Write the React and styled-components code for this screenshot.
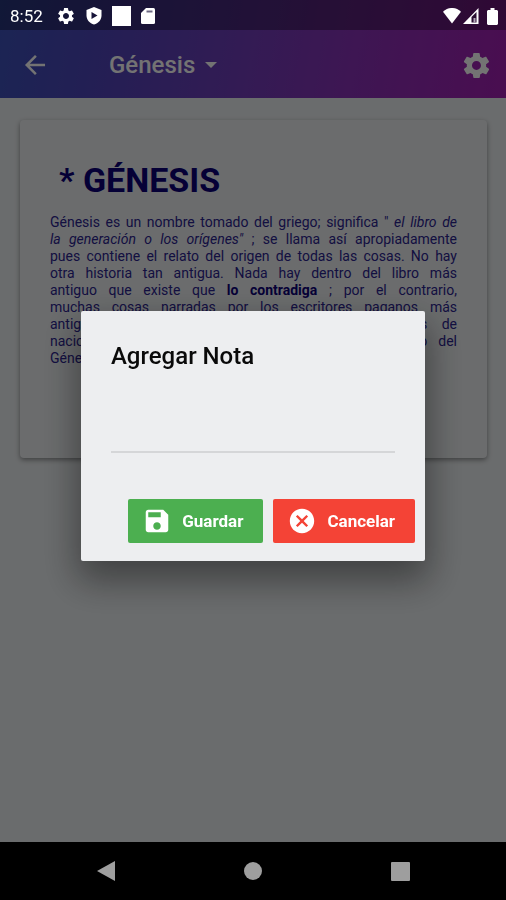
import styled, { createGlobalStyle } from "styled-components";
import { IoMdArrowBack, IoMdSettings, IoMdSave, IoMdCloseCircle } from "react-icons/io";
import { MdSettings } from "react-icons/md";

const GlobalStyle = createGlobalStyle`
  * {
    box-sizing: border-box;
  }
  body {
    margin: 0;
    background: #ebeff1;
    font-family: Roboto, "Liberation Sans", sans-serif;
  }
  svg {
    display: block;
    flex: none;
  }
`;

const Screen = styled.div`
  display: flex;
  flex-direction: column;
  min-height: 100vh;
`;

const TopArea = styled.div`
  background: linear-gradient(100deg, #3c52ba 0%, #4e45ba 20%, #733cba 50%, #8a31b8 70%, #a41fb2 100%);
`;

const StatusBar = styled.div`
  position: relative;
  z-index: 2;
  display: flex;
  justify-content: space-between;
  align-items: center;
  height: 30px;
  padding: 2px 8px 0 10px;
  background: rgba(0, 0, 0, 0.34);
  color: #fff;
`;

const StatusGroup = styled.div`
  display: flex;
  align-items: center;
  gap: ${({ $gap }) => $gap}px;
`;

const Clock = styled.time`
  min-width: 36px;
  font-size: 17px;
  line-height: 20px;
`;

const Toolbar = styled.header`
  display: flex;
  align-items: center;
  height: 68px;
  padding: 2px 14px 0 20px;
  color: #fff;
`;

const IconButton = styled.button`
  padding: 0;
  border: 0;
  background: none;
  color: inherit;
`;

const BookButton = styled.button`
  display: flex;
  align-items: center;
  gap: 10px;
  margin: 0 auto 0 59px;
  padding: 0;
  border: 0;
  background: none;
  color: inherit;
  font: 500 24px/28px Roboto, "Liberation Sans", sans-serif;
`;

const Content = styled.main`
  flex: 1;
  padding: 22px 19px 22px 20px;
`;

const Card = styled.article`
  min-height: 338px;
  padding: 40px 30px;
  border-radius: 4px;
  background: #edf0f2;
  color: #0c0078;
  box-shadow: 0 2px 5px rgba(0, 0, 0, 0.4);
`;

const CardTitle = styled.h1`
  margin: 0 0 14px;
  padding-left: 9px;
  font-size: 34px;
  font-weight: 700;
  line-height: 40px;
`;

const CardText = styled.p`
  margin: 0;
  color: #2c2490;
  font-size: 14px;
  line-height: 17px;
  text-align: justify;
`;

const Line = styled.span`
  display: block;
  text-align-last: ${({ $last }) => ($last ? "left" : "justify")};
`;

const Strong = styled.b`
  color: #0c0078;
`;

const Backdrop = styled.div`
  position: fixed;
  inset: 0;
  z-index: 1;
  display: flex;
  justify-content: center;
  align-items: center;
  padding: 30px 0 58px;
  background: rgba(0, 0, 0, 0.55);
`;

const Dialog = styled.form`
  width: 68%;
  padding: 30px 0 18px;
  border-radius: 2px;
  background: #edeef0;
  box-shadow: 0 16px 36px 4px rgba(0, 0, 0, 0.4);
`;

const DialogLabel = styled.label`
  display: block;
  padding: 0 30px;
  color: #0a0a0a;
  font-size: 24px;
  font-weight: 500;
  line-height: 30px;
`;

const NoteField = styled.div`
  padding: 42px 30px 46px;
`;

const NoteInput = styled.input`
  display: block;
  width: 100%;
  height: 40px;
  padding: 0;
  border: 0;
  border-bottom: 2px solid #d5d6d8;
  outline: 0;
  background: none;
  font: 20px Roboto, "Liberation Sans", sans-serif;
`;

const DialogActions = styled.div`
  display: flex;
  justify-content: flex-end;
  gap: 10px;
  padding: 0 10px;
`;

const ActionButton = styled.button`
  display: flex;
  align-items: center;
  gap: 10px;
  height: 44px;
  padding: 0 20px 0 14px;
  border: 0;
  border-radius: 2px;
  background: ${({ $color }) => $color};
  color: #fff;
  font: 700 17px/20px Roboto, "Liberation Sans", sans-serif;
`;

const NavBar = styled.nav`
  position: relative;
  z-index: 2;
  display: grid;
  grid-template-columns: repeat(3, 1fr);
  justify-items: center;
  align-items: center;
  height: 58px;
  padding: 0 32px;
  background: #000;
  color: #9e9e9e;
`;

function App() {
  return (
    <Screen>
      <GlobalStyle />
      <TopArea>
        <StatusBar>
          <StatusGroup $gap={10}>
            <Clock>8:52</Clock>
            <MdSettings size={20} />
            <svg width="16" height="18" viewBox="0 0 16 18">
              <path d="M8 0l7.500 3v5.500c0 4.200-3.200 7.900-7.500 9-4.300-1.100-7.500-4.800-7.500-9V3z" fill="#fff" />
              <path d="M5.500 5l6 3.500-6 3.500z" fill="#171439" />
            </svg>
            <svg width="19" height="20" viewBox="0 0 19 20">
              <rect width="19" height="20" fill="#fff" />
            </svg>
            <svg width="14" height="16" viewBox="0 0 14 16">
              <path d="M5 0h7.500Q14 0 14 1.500v13q0 1.500-1.500 1.500h-11Q0 16 0 14.500V5z" fill="#fff" />
              <path d="M5.500 2.500h6v2h-6z" fill="#6d6983" />
            </svg>
          </StatusGroup>
          <StatusGroup $gap={2}>
            <svg width="18" height="16" viewBox="0 0 18 16">
              <path d="M0 3.800C5-1.300 13-1.300 18 3.800L9 15.500z" fill="#fff" />
            </svg>
            <svg width="22" height="16" viewBox="0 0 22 16">
              <path d="M0 16L15.500 0v16z" fill="#fff" />
              <path d="M8.500 9L13.500 4v10.500h-5z" fill="#2a0e32" />
              <path d="M10.500 10h2v4.500h-2z" fill="#b5a8ba" />
            </svg>
            <svg width="11" height="17" viewBox="0 0 11 17">
              <path d="M3.500 0h4v2H10l1 1v13l-1 1H1l-1-1V3l1-1h2.500z" fill="#fff" />
            </svg>
          </StatusGroup>
        </StatusBar>
        <Toolbar>
          <IconButton type="button" aria-label="Volver">
            <IoMdArrowBack size={30} />
          </IconButton>
          <BookButton type="button">
            Génesis
            <svg width="12" height="6" viewBox="0 0 12 6">
              <path d="M0 0h12L6 6z" fill="currentColor" />
            </svg>
          </BookButton>
          <IconButton type="button" aria-label="Ajustes">
            <IoMdSettings size={31} />
          </IconButton>
        </Toolbar>
      </TopArea>
      <Content>
        <Card>
          <CardTitle>* GÉNESIS</CardTitle>
          <CardText>
            <Line>
              Génesis es un nombre tomado del griego; significa " <i>el libro de</i>
            </Line>
            <Line>
              <i>la generación o los orígenes"</i> ; se llama así apropiadamente
            </Line>
            <Line>pues contiene el relato del origen de todas las cosas. No hay</Line>
            <Line>otra historia tan antigua. Nada hay dentro del libro más</Line>
            <Line>
              antiguo que existe que <Strong>lo contradiga</Strong> ; por el contrario,
            </Line>
            <Line>muchas cosas narradas por los escritores paganos más</Line>
            <Line>antiguos, o que se descubren en las costumbres de</Line>
            <Line>naciones diferentes, confirman lo relatado en el libro del</Line>
            <Line $last>Génesis.</Line>
          </CardText>
        </Card>
      </Content>
      <Backdrop>
        <Dialog role="dialog" aria-modal="true" onSubmit={(e) => e.preventDefault()}>
          <DialogLabel htmlFor="nota">Agregar Nota</DialogLabel>
          <NoteField>
            <NoteInput id="nota" type="text" />
          </NoteField>
          <DialogActions>
            <ActionButton type="submit" $color="#4caf50">
              <IoMdSave size={30} />
              Guardar
            </ActionButton>
            <ActionButton type="button" $color="#f44336">
              <IoMdCloseCircle size={30} />
              Cancelar
            </ActionButton>
          </DialogActions>
        </Dialog>
      </Backdrop>
      <NavBar>
        <IconButton type="button" aria-label="Atrás">
          <svg width="18" height="20" viewBox="0 0 18 20">
            <path d="M18 0v20L0 10z" fill="currentColor" />
          </svg>
        </IconButton>
        <IconButton type="button" aria-label="Inicio">
          <svg width="18" height="18" viewBox="0 0 18 18">
            <circle cx="9" cy="9" r="9" fill="currentColor" />
          </svg>
        </IconButton>
        <IconButton type="button" aria-label="Recientes">
          <svg width="19" height="19" viewBox="0 0 19 19">
            <rect width="19" height="19" rx="1" fill="currentColor" />
          </svg>
        </IconButton>
      </NavBar>
    </Screen>
  );
}

export default App;
